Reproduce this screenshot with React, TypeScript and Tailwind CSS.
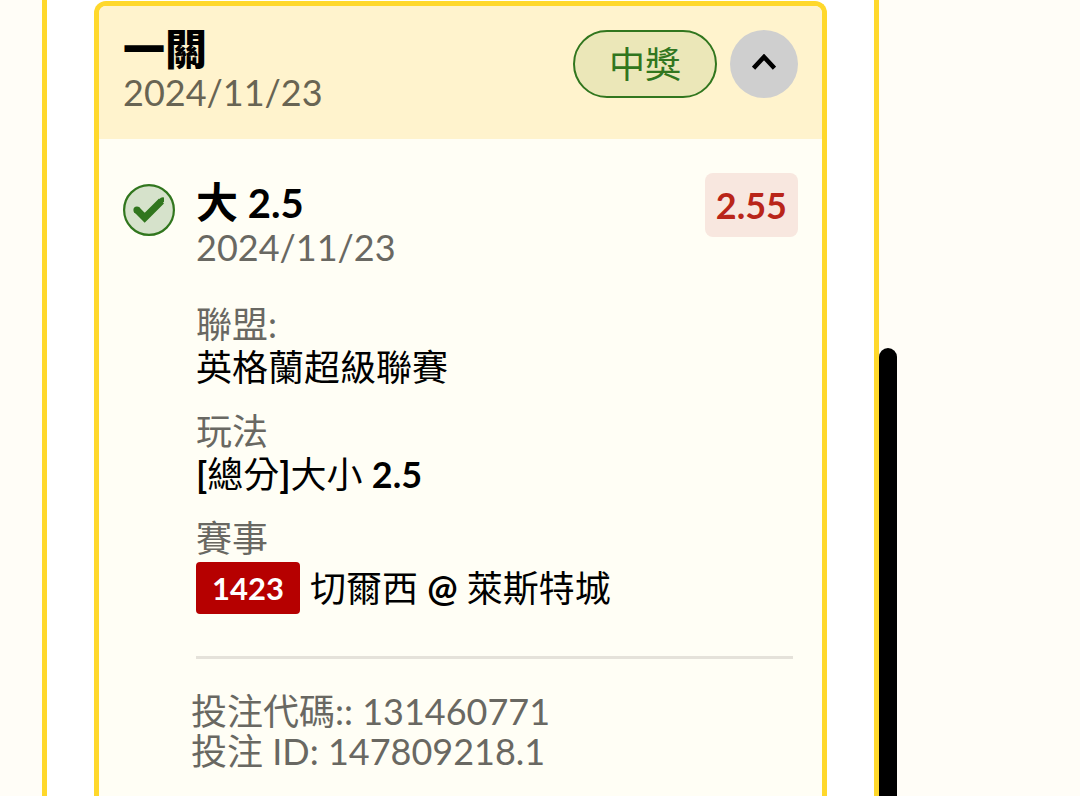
import { useState } from "react";

function ChevronUp({ open }: { open: boolean }) {
  return (
    <svg viewBox="0 0 24 16" className={open ? "h-4 w-6" : "h-4 w-6 rotate-180"} fill="none" stroke="currentColor" strokeWidth="4.6" aria-hidden="true">
      <path d="M1.5 14.2 12 3l10.5 11.2" />
    </svg>
  );
}

function WonIcon() {
  return (
    <svg viewBox="0 0 52 52" className="mt-[11px] size-[52px] shrink-0" role="img" aria-label="中獎">
      <circle cx="26" cy="26" r="24.9" fill="#d6e2cb" stroke="#31761e" strokeWidth="2.2" />
      <path d="M13.5 25.5 21.7 33.7 38.5 17" fill="none" stroke="#31761e" strokeWidth="7" />
      <circle cx="13.9" cy="26" r="3.5" fill="#31761e" />
      <path d="M35 16.5 37.5 14Q39 13 41 13.4V17.5L38 21Z" fill="#31761e" />
    </svg>
  );
}

function BetDetails() {
  return (
    <dl className="mt-[34px] flex flex-col gap-[21px] text-4xl leading-[43px]">
      <div>
        <dt className="text-[#696862]">聯盟:</dt>
        <dd>英格蘭超級聯賽</dd>
      </div>
      <div>
        <dt className="text-[#696862]">玩法</dt>
        <dd>
          <span className="font-bold">[</span>總分<span className="font-bold">]</span>大小 <span className="font-bold">2.5</span>
        </dd>
      </div>
      <div>
        <dt className="text-[#696862]">賽事</dt>
        <dd className="mt-[2px] flex items-center gap-[10px]">
          <span className="rounded bg-[#b60000] px-4 text-[31px] leading-[52px] font-bold text-white">1423</span>
          <span>
            切爾西 <span className="font-bold">@</span> 萊斯特城
          </span>
        </dd>
      </div>
    </dl>
  );
}

export default function App() {
  const [open, setOpen] = useState(true);
  return (
    <div lang="zh-Hant" className="flex min-h-screen bg-[#fffdf7] pl-[42px] font-['Lato','Noto_Sans_CJK_TC',sans-serif] text-black">
      <main className="flex min-w-0 flex-1 flex-col border-x-[5px] border-[#ffd82b] bg-white px-[47px] pt-px">
        <article className="flex flex-1 flex-col overflow-hidden rounded-t-xl border-[5px] border-b-0 border-[#ffd82b] bg-[#fffef5]">
          <header className="flex items-start gap-[13px] bg-[#fff3cd] px-6 pt-6 pb-[25px]">
            <div className="-mt-1 min-w-0 flex-1">
              <h1 className="text-[42px] leading-[46px] font-extrabold">一關</h1>
              <p className="text-4xl leading-10 text-[#686453]">2024/11/23</p>
            </div>
            <span className="rounded-full border-2 border-[#31761e] bg-[#ebe7b8] px-[34px] text-4xl leading-[64px] text-[#31761e]">中獎</span>
            <button
              type="button"
              aria-label="收合投注內容"
              aria-expanded={open}
              onClick={() => setOpen(!open)}
              className="mb-4 flex size-[68px] shrink-0 items-center justify-center rounded-full bg-[#cfcfcf] pb-1"
            >
              <ChevronUp open={open} />
            </button>
          </header>
          {open && (
            <div className="px-6 pt-[34px]">
              <section className="flex items-start gap-[21px]">
                <WonIcon />
                <div className="min-w-0 flex-1">
                  <div className="flex items-start justify-between">
                    <div className="pt-[6px]">
                      <h2 className="text-[42px] leading-[46px] font-bold">
                        大<span className="text-[40px]"> 2.5</span>
                      </h2>
                      <p className="text-4xl leading-[43px] text-[#696862]">2024/11/23</p>
                    </div>
                    <span className="rounded-lg bg-[#f8e7df] px-[11px] text-4xl leading-[64px] font-bold text-[#b92519]">2.55</span>
                  </div>
                  <BetDetails />
                  <hr className="mt-[42px] mr-[5px] border-t-[3px] border-[#e5e2da]" />
                </div>
              </section>
              <footer className="mt-8 ml-[68px] pb-6 text-4xl leading-10 text-[#696862]">
                <p>投注代碼:: 131460771</p>
                <p>投注 ID: 147809218.1</p>
              </footer>
            </div>
          )}
        </article>
      </main>
      <aside className="flex w-[201px] shrink-0 flex-col pt-[348px]" aria-hidden="true">
        <div className="w-[18px] flex-1 rounded-t-full bg-black" />
      </aside>
    </div>
  );
}
